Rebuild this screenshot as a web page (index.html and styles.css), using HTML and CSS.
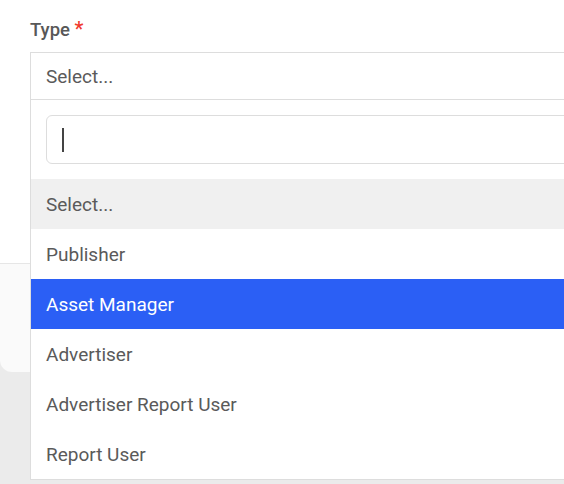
FILE: index.html
```html
<!DOCTYPE html>
<html lang="en">
<head>
<meta charset="utf-8">
<title>Type select</title>
<link rel="stylesheet" href="styles.css">
</head>
<body>
<div class="top">
  <div class="field">
    <label class="label">Type <span class="req">*</span></label>
    <div class="select">
      <span class="select-value">Select...</span>
      <div class="menu">
        <div class="search"><span class="caret"></span></div>
        <ul class="options">
          <li class="option focused">Select...</li>
          <li class="option">Publisher</li>
          <li class="option selected">Asset Manager</li>
          <li class="option">Advertiser</li>
          <li class="option">Advertiser Report User</li>
          <li class="option">Report User</li>
        </ul>
      </div>
    </div>
  </div>
</div>
<div class="card"></div>
</body>
</html>
```
FILE: styles.css
```css
* { box-sizing: border-box; }
html, body { margin: 0; padding: 0; }
body {
  background: #ebebeb;
  font-family: Roboto, "Liberation Sans", sans-serif;
  color: #555;
  height: 484px;
  overflow: hidden;
}
.top {
  background: #fff;
  height: 264px;
  border-bottom: 1px solid #e6e6e6;
  padding: 19px 0 0 30px;
}
.card {
  background: #fafafa;
  height: 108px;
  border-bottom-left-radius: 12px;
}
.label {
  display: block;
  height: 22px;
  font-size: 18.5px;
  line-height: 22px;
  font-weight: 500;
  color: #585858;
  margin-bottom: 11px;
}
.req { color: #f03a2e; font-size: 20px; line-height: 0; }
.select {
  position: relative;
  width: 560px;
  height: 48px;
  border: 1px solid #ddd;
  background: #fff;
  display: flex;
  align-items: center;
  padding-left: 15px;
  font-size: 19px;
  color: #5a5a5a;
}
.menu {
  position: absolute;
  top: 47px;
  left: -1px;
  width: 560px;
  background: #fff;
  border: 1px solid #ddd;
  border-top: none;
  padding-top: 15px;
  z-index: 10;
}
.search {
  margin: 0 15px 15px 15px;
  height: 49px;
  border: 1px solid #ddd;
  border-radius: 6px;
  display: flex;
  align-items: center;
  padding-left: 15px;
}
.caret {
  display: block;
  width: 2px;
  height: 24px;
  background: #444;
}
.options {
  list-style: none;
  margin: 0;
  padding: 0;
}
.option {
  height: 50px;
  display: flex;
  align-items: center;
  padding-left: 15px;
  font-size: 19px;
  color: #5a5a5a;
}
.option.focused { background: #f0f0f0; }
.option.selected { background: #2b5ff5; color: #fff; }
```
